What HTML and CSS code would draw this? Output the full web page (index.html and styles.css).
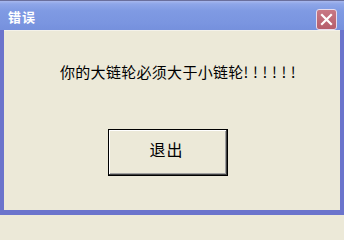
FILE: index.html
```html
<!DOCTYPE html>
<html lang="zh-CN">
<head>
<meta charset="utf-8">
<title>错误</title>
<link rel="stylesheet" href="styles.css">
</head>
<body>
<div class="window">
  <div class="titlebar">
    <span class="title">错误</span>
    <div class="close">
      <svg width="13" height="13" viewBox="0 0 13 13"><path d="M2 2 L11 11 M11 2 L2 11" stroke="#fff" stroke-width="2.2" stroke-linecap="square"/></svg>
    </div>
  </div>
  <div class="frame">
    <div class="body">
      <p class="message">你的大链轮必须大于小链轮<span class="bang">!!!!!!</span></p>
      <button class="btn"><span>退出</span></button>
    </div>
  </div>
</div>
</body>
</html>
```
FILE: styles.css
```css
html, body {
  margin: 0;
  padding: 0;
  background: #ece9d8;
}
.window {
  width: 344px;
  height: 215px;
  display: flex;
  flex-direction: column;
  font-family: "Noto Sans CJK SC", "DejaVu Sans", sans-serif;
}
.titlebar {
  height: 30px;
  flex: none;
  display: flex;
  align-items: center;
  justify-content: space-between;
  padding: 0 7px 0 8px;
  box-sizing: border-box;
  border-top: 1px solid #6a6f9c;
  background: linear-gradient(to bottom, #a7b8ee 0px, #8ea6e8 3px, #7f9ae3 10px, #7a95e0 22px, #7590dc 30px);
}
.title {
  color: #fff;
  font-weight: bold;
  font-size: 13px;
  letter-spacing: 1px;
  margin-top: 1px;
}
.close {
  width: 19px;
  height: 19px;
  margin-top: 8px;
  border: 1px solid #e6dcec;
  border-radius: 3px;
  background: linear-gradient(to bottom, #c87884, #b65e6c);
  display: flex;
  align-items: center;
  justify-content: center;
}
.frame {
  flex: 1;
  display: flex;
  background: #6b74cc;
  padding: 0 4px 5px 4px;
}
.body {
  flex: 1;
  background: #ece9d8;
  border-top: 1px solid #f4f2ea;
  display: flex;
  flex-direction: column;
  align-items: flex-start;
}
.message {
  margin: 32px 0 0 56px;
  font-size: 15px;
  line-height: 18px;
  letter-spacing: 0.3px;
  color: #000;
}
.bang {
  letter-spacing: 4.6px;
}
.btn {
  margin: 48px 0 0 104px;
  width: 120px;
  height: 47px;
  background: #ece9d8;
  border: 1px solid #000;
  box-shadow: inset -1px -1px 0 #404040, inset 1px 1px 0 #ffffff, inset -2px -2px 0 #a0a0a0;
  font-family: "Noto Sans CJK SC", "DejaVu Sans", sans-serif;
  font-size: 16px;
  color: #000;
  padding: 0;
  display: flex;
  align-items: center;
  justify-content: center;
}
.btn span {
  margin: -8px 0 0 -3px;
  letter-spacing: 1px;
}
```
